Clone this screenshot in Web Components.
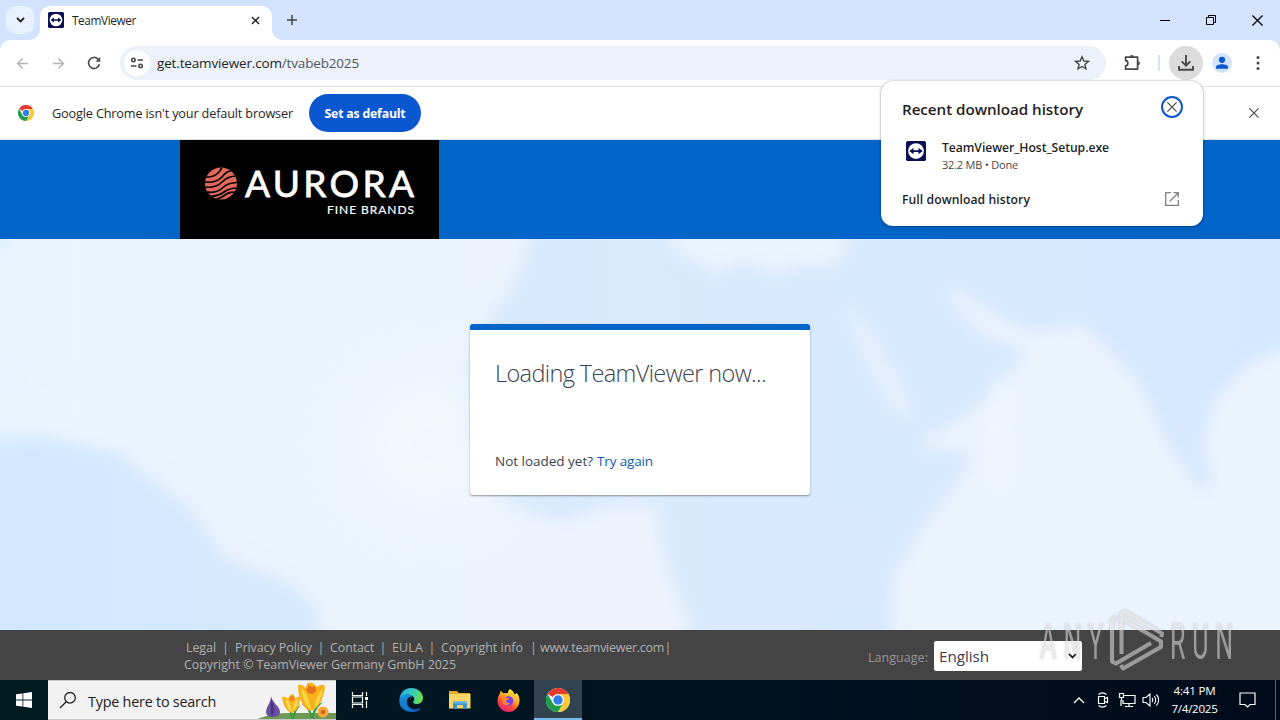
<!DOCTYPE html>
<html lang="en">
<head>
<meta charset="utf-8">
<title>TeamViewer</title>
<style>
  html, body {
    margin: 0;
    width: 1280px;
    height: 720px;
    overflow: hidden;
  }
  body {
    display: flex;
    flex-direction: column;
    position: relative;
    font-family: "Open Sans", "Noto Sans", sans-serif;
    font-size: 12px;
    color: #1f1f1f;
    background: #fff;
  }
</style>
</head>
<body>
<tab-strip></tab-strip>
<tool-bar></tool-bar>
<info-bar></info-bar>
<site-header></site-header>
<site-map>
  <loading-card>
    <fit-text slot="title" w="271">Loading TeamViewer now...</fit-text>
    <fit-text slot="hint" w="98">Not loaded yet?</fit-text>
    <fit-text slot="link" w="56">Try again</fit-text>
  </loading-card>
</site-map>
<site-footer></site-footer>
<task-bar></task-bar>
<download-bubble></download-bubble>
<run-mark></run-mark>

<script>
const define = (name, html) => {
  customElements.define(name, class extends HTMLElement {
    constructor() {
      super();
      this.attachShadow({mode: 'open'}).innerHTML = html;
    }
  });
};

const chromeLogo = `
  <circle cx="12" cy="12" r="12" fill="#fff"/>
  <path d="M12 12 1.6 6A12 12 0 0 1 22.4 6z" fill="#e33b2e"/>
  <path d="M22.4 6A12 12 0 0 1 12 24l5.2-9L12 6z" fill="#fcc934"/>
  <path d="M1.6 6A12 12 0 0 0 12 24l5.2-9-10.4 0z" fill="#1e9e4a"/>
  <circle cx="12" cy="12" r="6" fill="#fff"/>
  <circle cx="12" cy="12" r="4.7" fill="#2f7de9"/>`;

// name: [viewBox, markup]
const icons = {
  chevron: ['0 0 10 6', '<path d="M1 1l4 4 4-4" fill="none" stroke="currentColor" stroke-width="2"/>'],
  close: ['0 0 10 10', '<path d="M1 1 9 9M9 1 1 9" fill="none" stroke="currentColor" stroke-width="1.5"/>'],
  thin: ['0 0 10 10', '<path d="M.4.4l9.200 9.200M9.600.4.4 9.600" fill="none" stroke="currentColor" stroke-width="1.150"/>'],
  plus: ['0 0 10 10', '<path d="M5 0v10M0 5h10" stroke="currentColor" stroke-width="1.5"/>'],
  min: ['0 0 10 10', '<path d="M0 5.5h10" stroke="currentColor"/>'],
  restore: ['0 0 10 10', '<path d="M.5 2.5h7v7h-7zM2.5 2.5v-2h7v7h-2" fill="none" stroke="currentColor"/>'],
  tv: ['0 0 16 16', '<rect width="16" height="16" rx="1.500" fill="#0b1150"/><circle cx="8" cy="8" r="6.3" fill="#fff"/><path d="M2.6 8l3.4-2.5v1.8h4V5.5L13.4 8 10 10.5V8.7H6v1.8z" fill="#0b1150"/>'],
  back: ['0 0 16 16', '<path d="M14 8H3M8.2 2.6 2.8 8l5.4 5.4" fill="none" stroke="currentColor" stroke-width="1.6"/>'],
  forward: ['0 0 16 16', '<path d="M2 8h11M7.8 2.6 13.2 8l-5.4 5.4" fill="none" stroke="currentColor" stroke-width="1.6"/>'],
  reload: ['0 0 16 16', '<path d="M13.400 9.200A5.500 5.500 0 1 1 12 4.100l1.400 1.400" fill="none" stroke="currentColor" stroke-width="1.600"/><path d="M14.200 2v4.700H9.500z" fill="currentColor"/>'],
  tune: ['0 0 14 12', '<g fill="none" stroke="currentColor" stroke-width="1.6"><circle cx="3.4" cy="3" r="1.7"/><path d="M7.5 3H13M1 9h5.500"/><circle cx="10.600" cy="9" r="1.700"/></g>'],
  star: ['0 0 16 16', '<path d="M8 1.8l1.8 4.2 4.6.4-3.5 3 1.1 4.5L8 11.5l-4 2.4 1.1-4.500-3.500-3L6.200 6z" fill="none" stroke="currentColor" stroke-width="1.400"/>'],
  puzzle: ['0 0 18 18', '<path d="M2.600 3.200h12v12h-12v-3.400c3 0 3-5.200 0-5.200z" fill="none" stroke="currentColor" stroke-width="1.700" stroke-linejoin="round"/><path d="M6.800 3a2 2 0 0 1 4 0zM14.900 7.200a2 2 0 0 1 0 4z" fill="currentColor"/>'],
  download: ['0 0 18 18', '<path d="M9 1v10.500M4.700 7.400 9 11.700l4.300-4.300M2 12v3.800h14V12" fill="none" stroke="currentColor" stroke-width="1.900"/>'],
  person: ['0 0 20 20', '<circle cx="10" cy="10" r="10" fill="#d3e3fd"/><circle cx="10" cy="6.800" r="3.100" fill="#0b57d0"/><path d="M4 15.800v-1.600c0-3.800 12-3.800 12 0v1.600z" fill="#0b57d0"/>'],
  dots: ['0 0 4 16', '<g fill="currentColor"><circle cx="2" cy="2.500" r="1.500"/><circle cx="2" cy="8" r="1.500"/><circle cx="2" cy="13.500" r="1.500"/></g>'],
  open: ['0 0 14 14', '<path d="M6 .7H.7v12.600h12.600V8M8.500.7h4.800v4.800M13.300.7 4.800 9.200" fill="none" stroke="currentColor" stroke-width="1.300"/>'],
  chrome: ['0 0 24 24', chromeLogo],
  windows: ['0 0 16 16', '<path d="M0 2.300 6.500 1.400v6.200H0zM7.300 1.300 16 0v7.600H7.300zM0 8.400h6.500v6.200L0 13.700zM7.300 8.400H16V16l-8.700-1.300z" fill="#fff"/>'],
  search: ['0 0 18 18', '<g fill="none" stroke="currentColor" stroke-width="1.300"><circle cx="11" cy="6.800" r="5.300"/><path d="M7.200 10.800 1 17"/></g>'],
  taskview: ['0 0 18 18', '<path d="M1.500 1v3.500h10V1M1.500 17v-3.500h10V17M1.500 6h10v6h-10zM15.500 1v4M15.500 10v7" fill="none" stroke="#fff" stroke-width="1.200"/><path d="M14 6h3v3h-3z" fill="#fff"/>'],
  edge: ['0 0 24 24', `
    <defs>
      <linearGradient id="a" x1="0" y1="0" x2="1" y2=".3"><stop offset="0" stop-color="#2aa9e8"/><stop offset=".55" stop-color="#35c9c4"/><stop offset="1" stop-color="#67dd58"/></linearGradient>
      <linearGradient id="b" x1="0" y1="0" x2=".6" y2="1"><stop offset="0" stop-color="#1a9be0"/><stop offset="1" stop-color="#1059b8"/></linearGradient>
    </defs>
    <path d="M.6 10C2 3.600 6.500 0 12 0c7 0 12 4.700 12 10 0 3.700-2.800 6-6 6-2.600 0-3.900-.8-3.900-1.700 0-.8 1.200-1.300 1.200-3.300C15.300 6.500 6 4.500.6 10z" fill="url(#a)"/>
    <path d="M.6 10C4 5.200 11 5.600 13.500 8.500 9 8.500 7.500 12 7.900 15c.7 4.800 6 8 12.500 5.300 1-.4 1.600 0 1 .8C19 24 15 24.500 12 24 4 24-1 17.500.6 10z" fill="url(#b)"/>
    <path d="M8 10.500C6 16 10 22 15 22.300 11 24 3 22 3 15c0-2.500 2-4.500 5-4.500z" fill="#1683cf" opacity=".65"/>`],
  explorer: ['0 0 22 18', '<path d="M0 0h8l2 2h11v4H0z" fill="#e9a825"/><path d="M0 3h21.500v14.500H0z" fill="#fbd667"/><path d="M4 18v-7.500h14V18h-4v-4H8v4z" fill="#3b93d0"/><path d="M4 10.500h14v2H4z" fill="#5eb4e6"/>'],
  firefox: ['0 0 24 24', `
    <defs>
      <linearGradient id="f" x1=".8" y1="0" x2=".25" y2="1"><stop offset="0" stop-color="#fff04a"/><stop offset=".4" stop-color="#ffae26"/><stop offset=".65" stop-color="#ff5039"/><stop offset="1" stop-color="#e5187c"/></linearGradient>
    </defs>
    <path d="M13.500 0c3 1.500 4.200 3.800 4.600 5.200C20 5.700 20.500 4.500 20 3.500c2.500 2.500 3.700 5.700 3.500 9C23.200 19 18 24 12 24S.5 19 .5 12.500C.5 9 1.700 6.500 3 5c0-1.500.5-2.500 1.300-3.300C4.700 3 6 4.300 7.500 4.500 9 4 10.500 4 11.500 4.300 11.300 2.500 12 1 13.500 0z" fill="url(#f)"/>
    <circle cx="12" cy="12.500" r="5" fill="#7a3ff0"/>
    <path d="M4 8c3-1 5 0 6 1.500l3 .2c-.5 1.800-3 1.500-3.500 3-.3 1.500 2 2.500 4.200 1.600-2 3.700-8.200 3-8.200-1.300 0-2-.5-3-1.500-5z" fill="#ff8a2b"/>`],
  flowers: ['0 0 112 40', `
    <path d="M30 40c12-5 22-7 36-7h46v7z" fill="#6f9a56"/>
    <path d="M66 40c0-8-2-10-6-13 5 2 8 5 8 9 1-7 4-9 8-11-5 5-6 9-6 15zM85 38c-1-9-5-12-9-14 6 1 10 5 11 11 2-9 6-11 11-13-6 6-8 9-9 16z" fill="#3f9b3d"/>
    <path d="M46 16c1 7 9 10 9 16 0 4-4 5-7 5s-7-1-7-5c0-5 5-9 5-16z" fill="#6a4fa3"/>
    <path d="M46 18c0 7-1 12 1 19 3-5 3-11-1-19z" fill="#4c3583"/>
    <path d="M57 17q4-1 6 2 2-5 5-5 2 2 2 5 2-3 5-2c0 8-3 14-8 16-6-2-9-8-10-16z" fill="#f8b51f"/>
    <path d="M61 19q5 4 6 13-6-4-6-13zM73 18q-5 5-5 13 5-4 5-13z" fill="#ffda50"/>
    <circle cx="67" cy="18.500" r="2.800" fill="#ef8a1a"/>
    <path d="M73 5q5-1 7 3l3-5q4-1 6 1l3 3q3-3 7-2c2 3 0 8-1 11-2 7-6 13-13 15-9-4-12-16-12-26z" fill="#f7b11d"/>
    <path d="M76 8q7 4 10 22-8-6-10-22zM98 9q-7 5-9 20 7-7 9-20z" fill="#ffd53f"/>
    <path d="M81 9l2-1V5l4 2 3-1 1 5-3 3-5-1z" fill="#e9701b"/>
    <circle cx="98" cy="32" r="5.500" fill="#f6a93a"/><circle cx="98" cy="32" r="2.300" fill="#d0651c"/>`],
  up: ['0 0 12 8', '<path d="M1 7l5-5 5 5" fill="none" stroke="#fff" stroke-width="1.300"/>'],
  meet: ['0 0 14 16', '<path d="M2.500 4.500h6v7h-6zM9 6.500l2.500-1v5L9 9.500M2.500 2.500C5 .4 8 .4 10.500 2.500M2.500 13.500c2.500 2 5.500 2 8 0" fill="none" stroke="#fff" stroke-width="1.200"/>'],
  network: ['0 0 18 16', '<path d="M6 3.500h11v8H5V8M11 12v3M7 14.500h8M3 8v6M1.500 1.500h4v4h-4zM3.500 5.500V8H3" fill="none" stroke="#fff" stroke-width="1.200"/>'],
  speaker: ['0 0 18 16', '<path d="M1 5.500h3L8 2v12l-4-3.500H1zM10 6c1 1 1 3 0 4M12.200 4.200c2 2 2 5.600 0 7.600M14.400 2.500c3 3 3 8 0 11" fill="none" stroke="#fff" stroke-width="1.100"/>'],
  notice: ['0 0 17 16', '<path d="M1 1h15v11.500h-5L8.500 15 6 12.500H1z" fill="none" stroke="#fff" stroke-width="1.200"/>']
};

class UiIcon extends HTMLElement {
  constructor() {
    super();
    this.attachShadow({mode: 'open'});
  }
  connectedCallback() {
    const [box, body] = icons[this.getAttribute('name')];
    const [, , bw, bh] = box.split(' ');
    const w = this.getAttribute('w') || bw;
    const h = this.getAttribute('h') || w * bh / bw;
    this.shadowRoot.innerHTML = `
      <style>
        :host { display: inline-flex; flex: none; }
        svg { display: block; }
      </style>
      <svg width="${w}" height="${h}" viewBox="${box}">${body}</svg>`;
  }
}
customElements.define('ui-icon', UiIcon);

// one line of text, tracked so that it takes up exactly w pixels
class FitText extends HTMLElement {
  constructor() {
    super();
    this.attachShadow({mode: 'open'}).innerHTML = `
      <style>
        :host { display: inline-block; white-space: nowrap; flex: none; }
        span { display: inline-block; }
      </style>
      <span><slot></slot></span>`;
  }
  connectedCallback() {
    requestAnimationFrame(() => this.fit());
    this.fit();
  }
  fit() {
    const target = parseFloat(this.getAttribute('w'));
    const span = this.shadowRoot.querySelector('span');
    span.style.letterSpacing = '0px';
    const natural = span.getBoundingClientRect().width;
    if (!natural) return;
    span.style.letterSpacing = (target - natural) / this.textContent.length + 'px';
    this.style.width = target + 'px';
  }
}

define('tab-strip', `
  <style>
    :host { display: flex; height: 40px; background: #d3e3fd; align-items: center; flex: none; }
    .find { width: 28px; height: 28px; margin: 0 6px; border-radius: 10px; background: #e9f1fe; display: grid; place-items: center; }
    .tab { position: relative; box-sizing: border-box; width: 232px; height: 34px; align-self: flex-end; background: #fff; border-radius: 10px 10px 0 0; display: flex; align-items: center; padding: 0 12px 6px 8px; }
    .tab::before, .tab::after { content: ""; position: absolute; bottom: 0; width: 10px; height: 10px; }
    .tab::before { left: -10px; background: radial-gradient(circle at 0 0, transparent 9.5px, #fff 10px); }
    .tab::after { right: -10px; background: radial-gradient(circle at 100% 0, transparent 9.5px, #fff 10px); }
    fit-text { font-size: 11.800px; margin-left: 8px; }
    .tab ui-icon + fit-text + ui-icon { margin-left: auto; }
    .plus { margin-left: 15px; color: #444; }
    .win { margin-left: auto; display: flex; color: #000; }
    .win span { width: 46px; display: grid; place-items: center; }
  </style>
  <div class="find"><ui-icon name="chevron" w="9"></ui-icon></div>
  <div class="tab">
    <ui-icon name="tv" w="16"></ui-icon>
    <fit-text w="64">TeamViewer</fit-text>
    <ui-icon name="close" w="9"></ui-icon>
  </div>
  <ui-icon class="plus" name="plus" w="10"></ui-icon>
  <div class="win">
    <span><ui-icon name="min"></ui-icon></span>
    <span><ui-icon name="restore"></ui-icon></span>
    <span><ui-icon name="thin" w="11"></ui-icon></span>
  </div>
`);

define('tool-bar', `
  <style>
    :host { display: block; height: 47px; background: #d3e3fd; flex: none; }
    .row { box-sizing: border-box; height: 47px; display: flex; align-items: center; padding: 0 4px; background: #fff; border-radius: 10px 10px 0 0; border-bottom: 1px solid #dee1e6; color: #474747; }
    .cell { width: 36px; display: grid; place-items: center; flex: none; }
    .off { color: #b4b4b4; }
    .box { box-sizing: border-box; width: 986px; height: 34px; margin: 0 8px; border-radius: 17px; background: #ecf1fa; display: flex; align-items: center; padding: 0 16px 0 4px; }
    .site { width: 26px; height: 26px; border-radius: 50%; background: #fff; display: grid; place-items: center; margin-right: 7px; }
    .box fit-text { font-size: 13.500px; color: #1f1f1f; }
    .path { color: #51565e; }
    .star { margin-left: auto; }
    .line { width: 2px; height: 16px; background: #d8e2f6; margin: 0 9px 0 8px; }
    .dl { width: 34px; height: 34px; border-radius: 50%; background: #dcdcdc; display: grid; place-items: center; margin-right: 1px; }
  </style>
  <div class="row">
    <div class="cell off"><ui-icon name="back" w="15"></ui-icon></div>
    <div class="cell off"><ui-icon name="forward" w="15"></ui-icon></div>
    <div class="cell"><ui-icon name="reload" w="16"></ui-icon></div>
    <div class="box">
      <div class="site"><ui-icon name="tune" w="14"></ui-icon></div>
      <fit-text w="202">get.teamviewer.com<span class="path">/tvabeb2025</span></fit-text>
      <ui-icon class="star" name="star" w="16"></ui-icon>
    </div>
    <div class="cell"><ui-icon name="puzzle" w="18"></ui-icon></div>
    <div class="line"></div>
    <div class="dl"><ui-icon name="download" w="18"></ui-icon></div>
    <div class="cell"><ui-icon name="person" w="20"></ui-icon></div>
    <div class="cell"><ui-icon name="dots"></ui-icon></div>
  </div>
`);

define('info-bar', `
  <style>
    :host { box-sizing: border-box; display: flex; align-items: center; height: 53px; flex: none; padding: 0 21px 0 18px; border-bottom: 1px solid #dde3ea; background: #fff; }
    .msg { font-size: 12.700px; margin: 0 16px 0 18px; }
    .btn { width: 112px; height: 38px; border-radius: 19px; background: #0b57d0; color: #fff; font-size: 12.300px; font-weight: 700; display: grid; place-items: center; }
    .x { margin-left: auto; color: #474747; }
  </style>
  <ui-icon name="chrome" w="16"></ui-icon>
  <fit-text class="msg" w="241">Google Chrome isn't your default browser</fit-text>
  <div class="btn"><fit-text w="81">Set as default</fit-text></div>
  <ui-icon class="x" name="thin" w="10"></ui-icon>
`);

define('site-header', `
  <style>
    :host { display: flex; height: 99px; background: #0064c8; padding-left: 180px; flex: none; }
    svg { display: block; background: #000; }
    text { fill: #fff; font-family: Lato, sans-serif; }
  </style>
  <svg width="259" height="99" viewBox="0 0 259 99">
    <clipPath id="ball"><circle cx="41" cy="43.500" r="16"/></clipPath>
    <circle cx="41" cy="43.500" r="16" fill="#e0695c"/>
    <g clip-path="url(#ball)" fill="none" stroke="#000" stroke-width="1.700">
      <path d="M24 37c10 1 13-3 15-5s2-4 4-6M24 42c8 1 14-1 18-5 3-4 5-6 9-6M24 47c8 1 14-1 18-5s8-6 15-6M24 51.500c9 2 15 0 19-4s8-5 15-5M27 56c7 1 13-1 17-4s8-4 14-4M32 60c6 0 9-2 13-5s7-3 12-3"/>
    </g>
    <text x="65" y="57" font-size="37" textLength="169" stroke="#fff" stroke-width=".8">AURORA</text>
    <text x="147" y="73.500" font-size="12" textLength="87" stroke="#fff" stroke-width=".2">FINE BRANDS</text>
  </svg>
`);

define('site-map', `
  <style>
    :host { display: grid; grid-template: 391px / 1280px; flex: none; overflow: hidden; background: #dbebfe; }
    svg, .over { grid-area: 1 / 1; }
    .over { display: flex; justify-content: center; padding-top: 85px; z-index: 1; }
  </style>
  <svg width="1280" height="391" viewBox="0 0 1280 391">
    <defs>
      <filter id="soft" x="-10%" y="-10%" width="120%" height="120%"><feGaussianBlur stdDeviation="8"/></filter>
      <filter id="wide" x="-50%" y="-50%" width="200%" height="200%"><feGaussianBlur stdDeviation="28"/></filter>
      <linearGradient id="sea"><stop offset="0" stop-color="#d2e7ff"/><stop offset=".5" stop-color="#d9eafd"/><stop offset="1" stop-color="#d3e7ff"/></linearGradient>
      <linearGradient id="land"><stop offset="0" stop-color="#e6f3ff"/><stop offset=".16" stop-color="#ebf4fe"/><stop offset=".3" stop-color="#eaf3fd"/><stop offset="1" stop-color="#ecf3fd"/></linearGradient>
    </defs>
    <rect width="1280" height="391" fill="url(#sea)"/>
    <g filter="url(#soft)">
      <path fill="url(#land)" d="M20-20H535L515 45 488 80 466 130 458 190 500 262 560 282 600 268 655 264 664 320 690 391V420H315L318 370 290 345 225 320 190 270 150 240 120 215 40 198-20 205V20z"/>
      <path fill="#ebf3fd" d="M662-20 675 10 700 24 715 36 735 24 760 28 775 36 800 26 835 28 846 10 850-20z"/>
      <path fill="#e8f2fe" d="M843 62 862 80 900 145 914 185 892 168 865 115z"/>
      <path fill="#ebf3fd" d="M948 46 985 68 1010 85 1040 92 1080 84 1105 105 1140 145 1165 200 1200 250 1212 245 1202 205 1212 165 1250 122 1300 105V420H890L892 340 925 285 963 235 972 212 928 212 922 200 950 186 1000 150 1026 112 985 98 955 68z"/>
    </g>
    <ellipse cx="430" cy="205" rx="85" ry="80" fill="#f3f9ff" opacity=".75" filter="url(#wide)"/>
    <ellipse cx="1000" cy="190" rx="12" ry="60" fill="#f2f8ff" opacity=".6" filter="url(#soft)"/>
    <ellipse cx="50" cy="140" rx="20" ry="12" fill="#d9ebff" opacity=".35" filter="url(#wide)"/>
    <ellipse cx="845" cy="320" rx="12" ry="26" fill="#e4f0fe" opacity=".45" filter="url(#wide)"/>
  </svg>
  <div class="over"><slot></slot></div>
`);

define('loading-card', `
  <style>
    :host { box-sizing: border-box; display: flex; flex-direction: column; width: 340px; height: 171px; padding: 25px 25px 0; border-top: 6px solid #0064c8; border-radius: 3px; background: #fff; box-shadow: 0 1px 2px rgba(0, 0, 0, .4); }
    .title { height: 36px; line-height: 36px; font-size: 23.500px; font-weight: 300; color: #3b4252; }
    .row { display: flex; gap: 4px; margin-top: 60px; font-size: 13.500px; line-height: 20px; color: #3b4250; }
    .link { color: #0f5bb5; }
  </style>
  <div class="title"><slot name="title"></slot></div>
  <div class="row"><slot name="hint"></slot><span class="link"><slot name="link"></slot></span></div>
`);

define('site-footer', `
  <style>
    :host { box-sizing: border-box; display: flex; height: 50px; padding: 9px 198px 0 184px; background: #444; color: #b0b0b0; flex: none; font-size: 12.500px; line-height: 17px; }
    .links { display: flex; padding-left: 2px; }
    i { font-style: normal; width: 18px; text-align: center; }
    .lang { margin: 10px 6px 0 auto; font-size: 12.500px; color: #979797; }
    .select { box-sizing: border-box; width: 148px; height: 30px; margin-top: 2px; padding: 0 5px; border-radius: 2px; background: #fff; color: #3b3b4b; display: flex; align-items: center; justify-content: space-between; font-size: 15.200px; }
    .select ui-icon { color: #222; }
  </style>
  <div>
    <div class="links">
      <fit-text w="30">Legal</fit-text><i style="width:19px">|</i><fit-text w="77">Privacy Policy</fit-text><i>|</i><fit-text w="44">Contact</fit-text><i>|</i><fit-text w="31">EULA</fit-text><i>|</i><fit-text w="82">Copyright info</fit-text><i style="width:17px;text-indent:4px">|</i><fit-text w="124">www.teamviewer.com</fit-text><i style="width:8px">|</i>
    </div>
    <fit-text w="272">Copyright © TeamViewer Germany GmbH 2025</fit-text>
  </div>
  <fit-text class="lang" w="60">Language:</fit-text>
  <div class="select"><fit-text w="50">English</fit-text><ui-icon name="chevron" w="9"></ui-icon></div>
`);

define('task-bar', `
  <style>
    :host { display: flex; height: 40px; flex: none; background: linear-gradient(90deg, #001a22, #001620 35%, #001120 60%, #000a1a); color: #fff; }
    .app { width: 48px; height: 40px; display: grid; place-items: center; box-sizing: border-box; flex: none; }
    .search { box-sizing: border-box; width: 288px; display: flex; align-items: center; padding-left: 11px; background: #f2f2f2; border: 1px solid #c9cccd; border-width: 1px 0; color: #222; font-size: 14.400px; overflow: hidden; }
    .search fit-text { margin: 2px 9px 0 11px; }
    .active { background: #31434f; border-bottom: 2px solid #76b9ed; padding-top: 2px; margin-left: 1px; }
    .tray { margin-left: auto; display: flex; align-items: center; }
    .tray > ui-icon { width: 24px; justify-content: center; }
    .clock { width: 63px; display: flex; flex-direction: column; align-items: center; font-size: 11.600px; line-height: 18px; margin-top: -1px; }
    .tray > .bell { width: 42px; }
    .end { width: 1px; height: 40px; margin: 0 4px 0 7px; background: #5a6570; }
  </style>
  <div class="app"><ui-icon name="windows" w="16"></ui-icon></div>
  <div class="search">
    <ui-icon name="search" w="18"></ui-icon>
    <fit-text w="128">Type here to search</fit-text>
    <ui-icon name="flowers" w="112"></ui-icon>
  </div>
  <div class="app"><ui-icon name="taskview" w="18"></ui-icon></div>
  <div class="app" style="margin-left:3px"><ui-icon name="edge" w="24"></ui-icon></div>
  <div class="app" style="margin-left:1px"><ui-icon name="explorer" w="22"></ui-icon></div>
  <div class="app"><ui-icon name="firefox" w="23"></ui-icon></div>
  <div class="app active" style="margin-left:2px"><ui-icon name="chrome" w="24"></ui-icon></div>
  <div class="tray">
    <ui-icon name="up"></ui-icon>
    <ui-icon name="meet"></ui-icon>
    <ui-icon name="network"></ui-icon>
    <ui-icon name="speaker"></ui-icon>
    <div class="clock"><fit-text w="42">4:41 PM</fit-text><fit-text w="46">7/4/2025</fit-text></div>
    <ui-icon class="bell" name="notice"></ui-icon>
    <div class="end"></div>
  </div>
`);

define('download-bubble', `
  <style>
    :host { position: absolute; left: 881px; top: 81px; box-sizing: border-box; width: 322px; height: 145px; padding: 13px 20px 0 21px; border-radius: 12px; background: #fff; box-shadow: 0 0 2px rgba(0, 0, 0, .4), 0 2px 4px rgba(0, 0, 0, .15); display: flex; flex-direction: column; }
    .row { display: flex; align-items: center; }
    .head { height: 30px; font-size: 15.200px; font-weight: 600; }
    .ring { width: 18px; height: 18px; margin: -4px -1px 0 auto; border: 2px solid #0b57d0; border-radius: 50%; display: grid; place-items: center; color: #474747; margin-right: 0; }
    .file { margin-top: 14px; padding-left: 4px; align-items: flex-start; }
    .file ui-icon { margin: 3px 16px 0 0; }
    .names { display: flex; flex-direction: column; }
    .name { font-size: 12.200px; font-weight: 600; line-height: 19px; }
    .meta { font-size: 11px; line-height: 16px; color: #474747; }
    .full { margin-top: 16px; font-size: 12.200px; font-weight: 600; height: 20px; }
    .full ui-icon { margin: 0 4px 0 auto; color: #808288; }
  </style>
  <div class="row head">
    <fit-text w="181">Recent download history</fit-text>
    <div class="ring"><ui-icon name="thin" w="10"></ui-icon></div>
  </div>
  <div class="row file">
    <ui-icon name="tv" w="20"></ui-icon>
    <div class="names">
      <fit-text class="name" w="167">TeamViewer_Host_Setup.exe</fit-text>
      <fit-text class="meta" w="76">32.2 MB • Done</fit-text>
    </div>
  </div>
  <div class="row full">
    <fit-text w="128">Full download history</fit-text>
    <ui-icon name="open" w="14"></ui-icon>
  </div>
`);

define('run-mark', `
  <style>
    :host { position: absolute; left: 1030px; top: 600px; width: 220px; height: 80px; opacity: .58; filter: drop-shadow(0 0 1.500px rgba(90, 90, 90, .5)); }
    svg { display: block; overflow: visible; }
    text { font: 400 50px Roboto, sans-serif; fill: #dcdcdc; }
  </style>
  <svg width="220" height="80" viewBox="0 0 220 80">
    <text transform="translate(10 59) scale(.5 1)" textLength="126">ANY</text>
    <g fill="none" stroke="#dcdcdc" stroke-width="4" stroke-linejoin="round">
      <path d="M87 17.500C83.500 18 82 19 82 22V61.500L86 63.500 121 43"/>
      <path d="M91.500 54V13.500L95 11.500 132 33.500 131.500 37"/>
      <path d="M91.500 18 131 41.500V47L93 68.500 91 65"/>
    </g>
    <text transform="translate(140 59) scale(.5 1)" textLength="126">RUN</text>
  </svg>
`);

customElements.define('fit-text', FitText);
</script>
</body>
</html>
